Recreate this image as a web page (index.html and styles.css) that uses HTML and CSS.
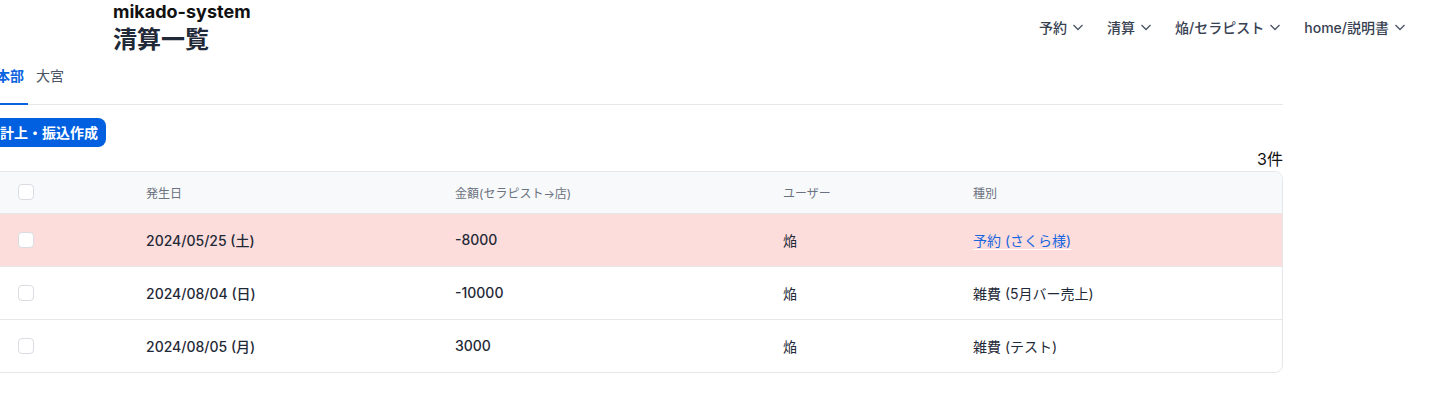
FILE: index.html
```html
<!DOCTYPE html>
<html lang="ja">
<head>
<meta charset="utf-8">
<title>清算一覧</title>
<link rel="stylesheet" href="styles.css">
</head>
<body>
<header class="topbar">
  <div class="brand">
    <div class="site">mikado-system</div>
    <h1 class="page-title">清算一覧</h1>
  </div>
  <nav class="menu">
    <span class="menu-item">予約 <svg class="chev" viewBox="0 0 12 12"><path d="M1.5 4 L6 8.5 L10.5 4"/></svg></span>
    <span class="menu-item">清算 <svg class="chev" viewBox="0 0 12 12"><path d="M1.5 4 L6 8.5 L10.5 4"/></svg></span>
    <span class="menu-item">焔/セラピスト <svg class="chev" viewBox="0 0 12 12"><path d="M1.5 4 L6 8.5 L10.5 4"/></svg></span>
    <span class="menu-item">home/説明書 <svg class="chev" viewBox="0 0 12 12"><path d="M1.5 4 L6 8.5 L10.5 4"/></svg></span>
  </nav>
</header>
<main class="main">
  <div class="tabs">
    <span class="tab active">本部</span>
    <span class="tab">大宮</span>
  </div>
  <button class="btn">計上・振込作成</button>
  <div class="count">3件</div>
  <div class="table-wrap">
    <table class="table">
      <colgroup>
        <col class="c1"><col class="c2"><col class="c3"><col class="c4"><col class="c5">
      </colgroup>
      <thead>
        <tr><th class="chk"><span class="box"></span></th><th>発生日</th><th>金額(セラピスト→店)</th><th>ユーザー</th><th>種別</th></tr>
      </thead>
      <tbody>
        <tr class="warn"><td class="chk"><span class="box"></span></td><td class="strong">2024/05/25 (土)</td><td class="strong">-8000</td><td>焔</td><td><a class="link">予約 (さくら様)</a></td></tr>
        <tr><td class="chk"><span class="box"></span></td><td class="strong">2024/08/04 (日)</td><td class="strong">-10000</td><td>焔</td><td>雑費 (5月バー売上)</td></tr>
        <tr><td class="chk"><span class="box"></span></td><td class="strong">2024/08/05 (月)</td><td class="strong">3000</td><td>焔</td><td>雑費 (テスト)</td></tr>
      </tbody>
    </table>
  </div>
</main>
</body>
</html>
```
FILE: styles.css
```css
* { box-sizing: border-box; }
body {
  margin: 0;
  font-family: Inter, "Noto Sans CJK JP", sans-serif;
  color: #1f2937;
  background: #fff;
}
.topbar {
  display: flex;
  align-items: center;
  justify-content: space-between;
  padding: 0 32px 0 113px;
  height: 58px;
}
.site {
  font-size: 18px;
  font-weight: 700;
  line-height: 22px;
  color: #111;
}
.page-title {
  margin: 0;
  font-size: 24px;
  font-weight: 700;
  line-height: 34px;
  color: #1f2937;
}
.menu {
  display: flex;
  gap: 23px;
  margin-top: -4px;
}
.menu-item {
  display: flex;
  align-items: center;
  gap: 5px;
  font-size: 14px;
  color: #374151;
  font-weight: 500;
}
.chev {
  width: 12px;
  height: 12px;
  fill: none;
  stroke: #4b5563;
  stroke-width: 1.3;
}
.main {
  margin-left: -8px;
  width: 1291px;
}
.tabs {
  display: flex;
  gap: 4px;
  border-bottom: 1px solid #e5e7eb;
}
.tab {
  padding: 8px 4px 17px;
  font-size: 14px;
  line-height: 20px;
  color: #4b5563;
  border-bottom: 2px solid transparent;
  margin-bottom: -1px;
}
.tab.active {
  color: #0b63e0;
  font-weight: 700;
  border-bottom-color: #0b63e0;
}
.btn {
  display: block;
  margin-top: 13px;
  padding: 4px 8px;
  border: 0;
  border-radius: 8px;
  background: #0060df;
  color: #fff;
  font-family: inherit;
  font-size: 14px;
  font-weight: 700;
  line-height: 21px;
}
.count {
  text-align: right;
  font-size: 16px;
  line-height: 24px;
  color: #111;
}
.table-wrap {
  border: 1px solid #e5e7eb;
  border-radius: 8px;
  overflow: hidden;
}
.table {
  width: 100%;
  border-collapse: collapse;
  table-layout: fixed;
  font-size: 14px;
}
.c1 { width: 137px; }
.c2 { width: 309px; }
.c3 { width: 328px; }
.c4 { width: 190px; }
.table th {
  background: #f8f9fa;
  height: 41px;
  text-align: left;
  font-size: 12px;
  font-weight: 400;
  color: #6b7280;
  padding: 0 16px;
  border-bottom: 1px solid #e5e7eb;
}
.table td {
  height: 53px;
  padding: 0 16px;
  border-bottom: 1px solid #e5e7eb;
  color: #1f2937;
}
.table tbody tr:last-child td { border-bottom: 0; }
.table .chk { padding-left: 25px; }
.box {
  display: block;
  width: 16px;
  height: 16px;
  border: 1px solid #d9dce1;
  border-radius: 4px;
  background: #fff;
}
.strong { font-weight: 500; }
.warn td { background: #fddddc; }
.link {
  color: #1766de;
  text-decoration: underline;
  text-decoration-color: #fff;
  text-underline-offset: 3px;
}
```
